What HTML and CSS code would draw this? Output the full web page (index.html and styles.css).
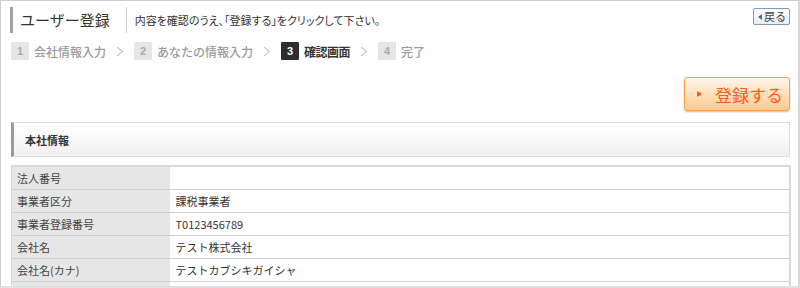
FILE: index.html
```html
<!DOCTYPE html>
<html lang="ja">
<head>
<meta charset="utf-8">
<link rel="stylesheet" href="styles.css">
</head>
<body>
<div class="page">
  <div class="head">
    <h1 class="title">ユーザー登録</h1>
    <p class="lead">内容を確認のうえ、「登録する」をクリックして下さい。</p>
    <a class="back"><span class="back-tri"></span>戻る</a>
  </div>
  <ol class="steps">
    <li class="step"><span class="num">1</span><span class="label">会社情報入力</span></li>
    <li class="chev"><svg width="8" height="11" viewBox="0 0 8 11"><path d="M1 1 L6.5 5.5 L1 10" fill="none" stroke="#c8c8c8" stroke-width="1.2"/></svg></li>
    <li class="step"><span class="num">2</span><span class="label">あなたの情報入力</span></li>
    <li class="chev"><svg width="8" height="11" viewBox="0 0 8 11"><path d="M1 1 L6.5 5.5 L1 10" fill="none" stroke="#c8c8c8" stroke-width="1.2"/></svg></li>
    <li class="step current"><span class="num">3</span><span class="label">確認画面</span></li>
    <li class="chev"><svg width="8" height="11" viewBox="0 0 8 11"><path d="M1 1 L6.5 5.5 L1 10" fill="none" stroke="#c8c8c8" stroke-width="1.2"/></svg></li>
    <li class="step"><span class="num">4</span><span class="label">完了</span></li>
  </ol>
  <div class="actions">
    <button class="submit"><span class="submit-tri"></span>登録する</button>
  </div>
  <h2 class="section">本社情報</h2>
  <table class="info">
    <tr><th>法人番号</th><td></td></tr>
    <tr><th>事業者区分</th><td>課税事業者</td></tr>
    <tr><th>事業者登録番号</th><td>T0123456789</td></tr>
    <tr><th>会社名</th><td>テスト株式会社</td></tr>
    <tr><th>会社名(カナ)</th><td>テストカブシキガイシャ</td></tr>
    <tr><th>&nbsp;</th><td></td></tr>
  </table>
</div>
</body>
</html>
```
FILE: styles.css
```css
* { box-sizing: border-box; }
html, body { margin: 0; padding: 0; background: #fff; }
body {
  font-family: "Noto Sans CJK JP", "Liberation Sans", sans-serif;
  color: #333;
}
.page {
  width: 800px;
  height: 288px;
  border-top: 1px solid #cfcfcf;
  border-left: 1px solid #cfcfcf;
  border-right: 2px solid #d6d6d6;
  border-bottom: 2px solid #e0e0e0;
  padding: 0 8px 0 9px;
  overflow: hidden;
}
.head {
  display: flex;
  align-items: flex-start;
  margin-top: 6px;
}
.title {
  margin: 0;
  font-size: 15px;
  font-weight: normal;
  line-height: 26px;
  height: 26px;
  border-left: 3px solid #a0a0a0;
  padding-left: 7px;
  padding-right: 17px;
  position: relative;
  color: #333;
}
.title::after {
  content: "";
  position: absolute;
  right: 0;
  top: 0;
  height: 26px;
  border-right: 1px solid #d0d0d0;
}
.lead {
  margin: 0;
  padding-left: 8px;
  font-size: 11px;
  line-height: 26px;
  font-feature-settings: "palt";
}
.back {
  margin-left: auto;
  margin-right: 0;
  margin-top: 1px;
  display: flex;
  align-items: center;
  height: 17px;
  padding: 0 3px 0 4px;
  border: 1px solid #7d98c4;
  border-radius: 2px;
  background: linear-gradient(#ffffff, #e9ecf0);
  font-size: 11px;
  line-height: 15px;
  color: #444;
}
.back-tri {
  display: inline-block;
  width: 0;
  height: 0;
  border-top: 3px solid transparent;
  border-bottom: 3px solid transparent;
  border-right: 4px solid #3c6ab8;
  margin-right: 2px;
}
.steps {
  list-style: none;
  margin: 8px 0 0 1px;
  padding: 0;
  display: flex;
  align-items: center;
  height: 20px;
}
.step {
  display: flex;
  align-items: center;
}
.num {
  display: inline-flex;
  align-items: center;
  justify-content: center;
  width: 18px;
  height: 18px;
  background: #e6e6e6;
  color: #aaa;
  font-family: "Liberation Sans", sans-serif;
  font-size: 11px;
  font-weight: bold;
  border-radius: 1px;
}
.label {
  margin-left: 5px;
  font-size: 12px;
  color: #9a9a9a;
  font-weight: 500;
}
.chev {
  margin: 0 10px;
  display: flex;
  align-items: center;
}
.current .num {
  background: #2e2e2e;
  color: #fff;
}
.current .label {
  color: #333;
  font-weight: bold;
  letter-spacing: -0.5px;
}
.actions {
  display: flex;
  justify-content: flex-end;
  margin-top: 16px;
}
.submit {
  display: flex;
  align-items: center;
  width: 106px;
  height: 34px;
  padding: 0 0 0 12px;
  border: 1px solid #f6a24a;
  border-radius: 3px;
  background: linear-gradient(#fff6ec 0%, #ffe2bf 45%, #ffc98e 100%);
  box-shadow: 0 1px 2px rgba(0,0,0,0.25);
  font-family: "Noto Sans CJK JP", sans-serif;
  font-size: 17px;
  color: #ff5a1a;
  cursor: pointer;
}
.submit-tri {
  display: inline-block;
  width: 0;
  height: 0;
  border-top: 3.5px solid transparent;
  border-bottom: 3.5px solid transparent;
  border-left: 5px solid #ff5a1a;
  margin-right: 13px;
}
.section {
  margin: 11px 0 0 1px;
  height: 35px;
  display: flex;
  align-items: center;
  border: 1px solid #dcdcdc;
  border-left: 3px solid #9a9a9a;
  background: linear-gradient(#ffffff 0%, #fafafa 45%, #efefef 100%);
  padding-left: 11px;
  font-size: 11px;
  font-weight: bold;
  color: #333;
}
.info {
  margin: 8px 0 0 1px;
  width: 780px;
  border-collapse: collapse;
  border-top: 2px solid #dadada;
  border-right: 2px solid #dadada;
  border-left: 1px solid #dadada;
  font-size: 11px;
}
.info th, .info td {
  height: 23px;
  padding: 0 0 0 6px;
  text-align: left;
  font-weight: normal;
  border-bottom: 1px solid #d0d0d0;
  color: #333;
}
.info th {
  width: 158px;
  background: #e6e6e6;
  color: #444;
  padding-left: 5px;
}
.info td { background: #fff; }
```
